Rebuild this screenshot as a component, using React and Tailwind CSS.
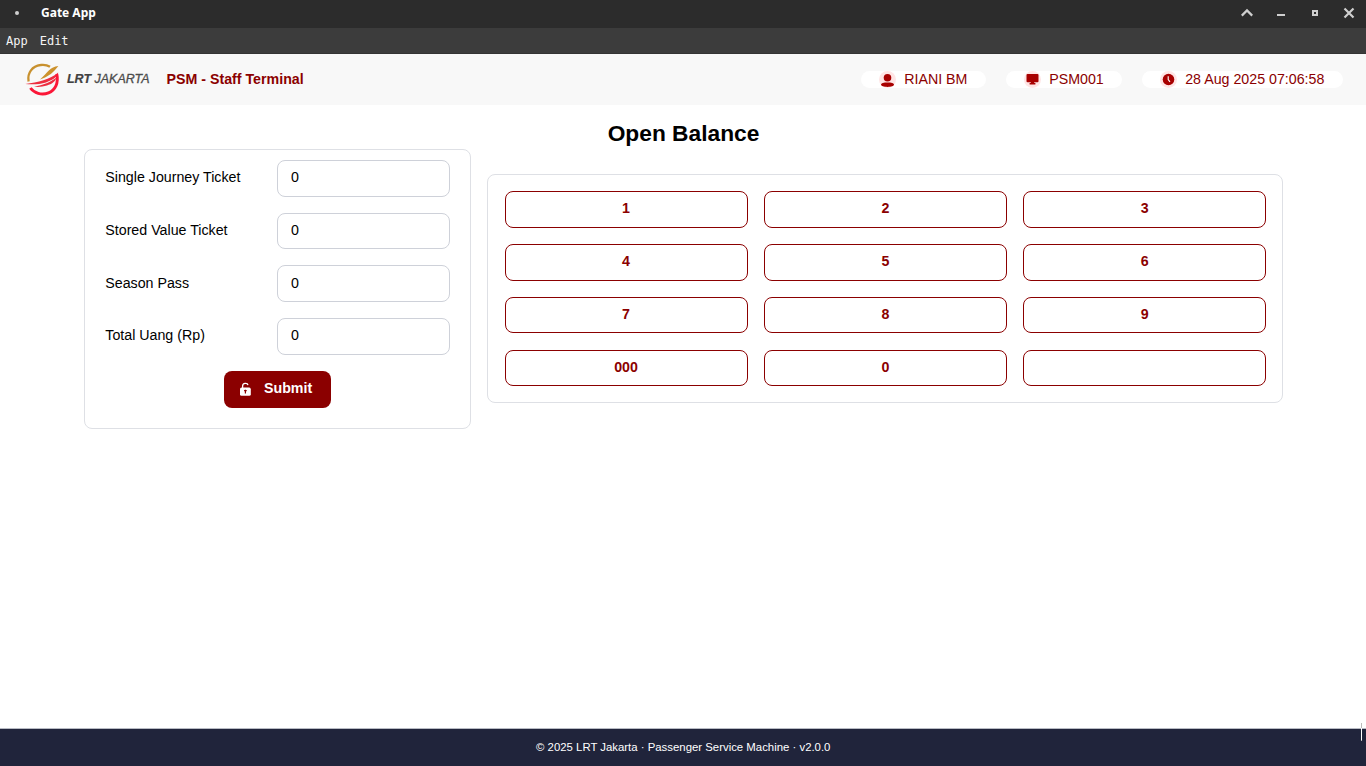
import React from "react";

const fields = ["Single Journey Ticket", "Stored Value Ticket", "Season Pass", "Total Uang (Rp)"];
const keys = ["1", "2", "3", "4", "5", "6", "7", "8", "9", "000", "0", ""];

function Logo() {
  return (
    <svg className="h-[36px] w-[126px] shrink-0" viewBox="0 0 126 36" fill="none">
      <path d="M3.6 19.5 C2 11 7.5 4 15.5 3 C19.5 2.4 22.5 3.2 25 4.8" stroke="#c8912f" strokeWidth="2.3" />
      <path d="M33.4 4 C25 4.6 22.5 11 15 17.4 C22.5 15 27 11.5 30 8 Z" fill="#cc922c" />
      <path d="M0.3 22 C13 20.6 25 17.6 33.2 10.6 C32.6 14.5 28.5 18 21 20.4 C15 22.3 7.5 22.8 0.3 22 Z" fill="#ed2d40" />
      <path d="M9 24.6 C18 23.6 26 20 31.6 15.6 C30 20 27 22 22 23.5 C17.5 24.9 13 25.2 9 24.6 Z" fill="#ed2d40" />
      <path d="M31.8 12 C33.8 21 30.2 28.2 23.5 30.8 C16.5 33.5 9 31 5.4 26" stroke="#fb1738" strokeWidth="2.9" />
      <text x="42" y="21.4" fill="#414141" stroke="#414141" strokeWidth=".2" fontFamily="Liberation Sans, sans-serif" fontSize="12.2" fontStyle="italic" fontWeight="bold" textLength="24" lengthAdjust="spacingAndGlyphs">LRT</text>
      <text x="69.5" y="21.4" fill="#4c4c4c" stroke="#4c4c4c" strokeWidth=".3" fontFamily="Liberation Sans, sans-serif" fontSize="12.2" fontStyle="italic" textLength="55" lengthAdjust="spacingAndGlyphs">JAKARTA</text>
    </svg>
  );
}

function UserIcon() {
  return (
    <svg className="size-[17px]" viewBox="0 0 17 17" fill="#a80000">
      <circle cx="8.5" cy="6.7" r="3.8" />
      <path d="M2 13.6C2 12 5 11.4 8.5 11.4s6.5.6 6.5 2.2S12 16 8.5 16 2 15.2 2 13.6Z" />
    </svg>
  );
}

function MonitorIcon() {
  return (
    <svg className="size-[17px]" viewBox="0 0 17 17" fill="#a80000">
      <rect x="2.5" y="3" width="12" height="8.2" rx="1" />
      <path d="M6.8 11h3.4v1h1.2v1.6H5.6V12h1.2z" />
    </svg>
  );
}

function ClockIcon() {
  return (
    <svg className="size-[17px]" viewBox="0 0 17 17">
      <circle cx="8.5" cy="8.5" r="5.8" fill="#a80000" />
      <path d="M8.2 5.2v3.4l1.8 2.2" fill="none" stroke="#fff" strokeWidth="1.1" />
    </svg>
  );
}

function Pill({ icon, children, className }) {
  return (
    <div className={"flex h-[17px] items-center rounded-full bg-white pl-[18px] " + className}>
      <span className="flex size-[17px] shrink-0 items-center justify-center rounded-full bg-[#ffe5e5]">{icon}</span>
      <span className="ml-[8.2px] whitespace-nowrap leading-[17px]">{children}</span>
    </div>
  );
}

function WindowControls() {
  return (
    <svg className="h-[28px] w-[126px]" viewBox="0 0 126 28" fill="none" stroke="#cfcfcf">
      <path d="M1.8 15.6 7 10.4l5.2 5.2" strokeWidth="2.2" />
      <path d="M37 15h8" strokeWidth="2" />
      <path d="M73 11h4v4h-4z" strokeWidth="2" />
      <path d="m104.5 8.5 9 9m0-9-9 9" strokeWidth="2.2" />
    </svg>
  );
}

export default function App() {
  return (
    <div className="relative flex h-[766px] w-[1366px] flex-col overflow-hidden bg-white font-['Liberation_Sans',Arial,sans-serif] text-[14.23px] text-black">
      <div className="flex h-[28px] shrink-0 items-center bg-[#2c2c2c] text-white">
        <span className="mb-[2px] ml-[15px] size-[4px] rounded-full bg-[#d0d0d0]" />
        <span className="ml-[22px] font-['Noto_Sans',sans-serif] text-[12px] leading-[26px] font-bold -translate-y-px">Gate App</span>
        <div className="ml-auto"><WindowControls /></div>
      </div>
      <div className="flex h-[26px] shrink-0 items-center gap-[12px] border-b border-[#343434] bg-[#3c3c3c] pl-[6px] font-['DejaVu_Sans_Mono','Noto_Sans',monospace] text-[12px] text-[#f4f4f4]">
        <span>App</span>
        <span>Edit</span>
      </div>

      <header className="flex h-[51px] shrink-0 items-center bg-[#f8f8f8] pl-[25px] pr-[23px] text-[#8b0000]">
        <Logo />
        <h1 className="ml-[15.5px] text-[14.23px] font-bold whitespace-nowrap">PSM - Staff Terminal</h1>
        <div className="ml-auto flex gap-[20px]">
          <Pill icon={<UserIcon />} className="w-[125px]">RIANI BM</Pill>
          <Pill icon={<MonitorIcon />} className="w-[116px]">PSM001</Pill>
          <Pill icon={<ClockIcon />} className="w-[201px]">28 Aug 2025 07:06:58</Pill>
        </div>
      </header>

      <main className="flex-1 px-[84px] pt-[16px]">
        <h2 className="h-[28px] pl-px text-center text-[22.75px] leading-[24px] font-bold">Open Balance</h2>
        <div className="flex items-start gap-[16px]">
          <form className="h-[280px] w-[387px] shrink-0 rounded-[8px] border border-[#dee0e5] px-[20px] pt-[10px]">
            <div className="flex flex-col gap-[16.2px]">
              {fields.map((label) => (
                <label key={label} className="flex h-[36.56px] items-center">
                  <span className="w-[172px] pb-[0.8px] pl-[0.3px]">{label}</span>
                  <input className="h-full w-[173px] rounded-[8px] border border-[#ced1d9] bg-white px-[13px] pb-[2px]" defaultValue="0" />
                </label>
              ))}
            </div>
            <button type="button" className="mx-auto mt-[16.16px] flex h-[37px] w-[107px] items-center rounded-[8px] bg-[#8b0000] pl-[15px] font-bold text-white">
              <svg className="h-[15px] w-[13px]" viewBox="0 0 13 15" fill="none">
                <path d="M3.6 7V4c0-3.4 5-3.5 5.4-.8" stroke="white" strokeWidth="1.3" />
                <rect x="1" y="5.6" width="10.8" height="8.2" rx="1.6" fill="white" />
                <path d="M6.4 7.7v3.8M5.1 8.7h2.6" stroke="#8b0000" strokeWidth="1.2" />
              </svg>
              <span className="ml-[12px] -translate-y-px">Submit</span>
            </button>
          </form>
          <section className="mt-[25px] grid h-[229px] w-[796px] shrink-0 grid-cols-3 content-start gap-[16.4px] rounded-[8px] border border-[#dee0e5] pl-[16.5px] pr-[15.7px] pt-[16.4px]">
            {keys.map((key, i) => (
              <button key={i} type="button" className="h-[36.4px] rounded-[8px] border border-[#8b0000] bg-white pb-[1.4px] font-bold text-[#8b0000]">{key}</button>
            ))}
          </section>
        </div>
      </main>

      <footer className="flex h-[38px] shrink-0 items-center justify-center border-t border-[#b8bbc4] bg-[#20243b] pl-[0.5px] text-[11.38px] text-white">
        © 2025 LRT Jakarta · Passenger Service Machine · v2.0.0
      </footer>
      <span className="absolute top-[723px] left-[1361px] h-[18px] w-px bg-[linear-gradient(#bbb_0_5px,#fff_5px_17px,#bbb_17px)]" />
    </div>
  );
}
